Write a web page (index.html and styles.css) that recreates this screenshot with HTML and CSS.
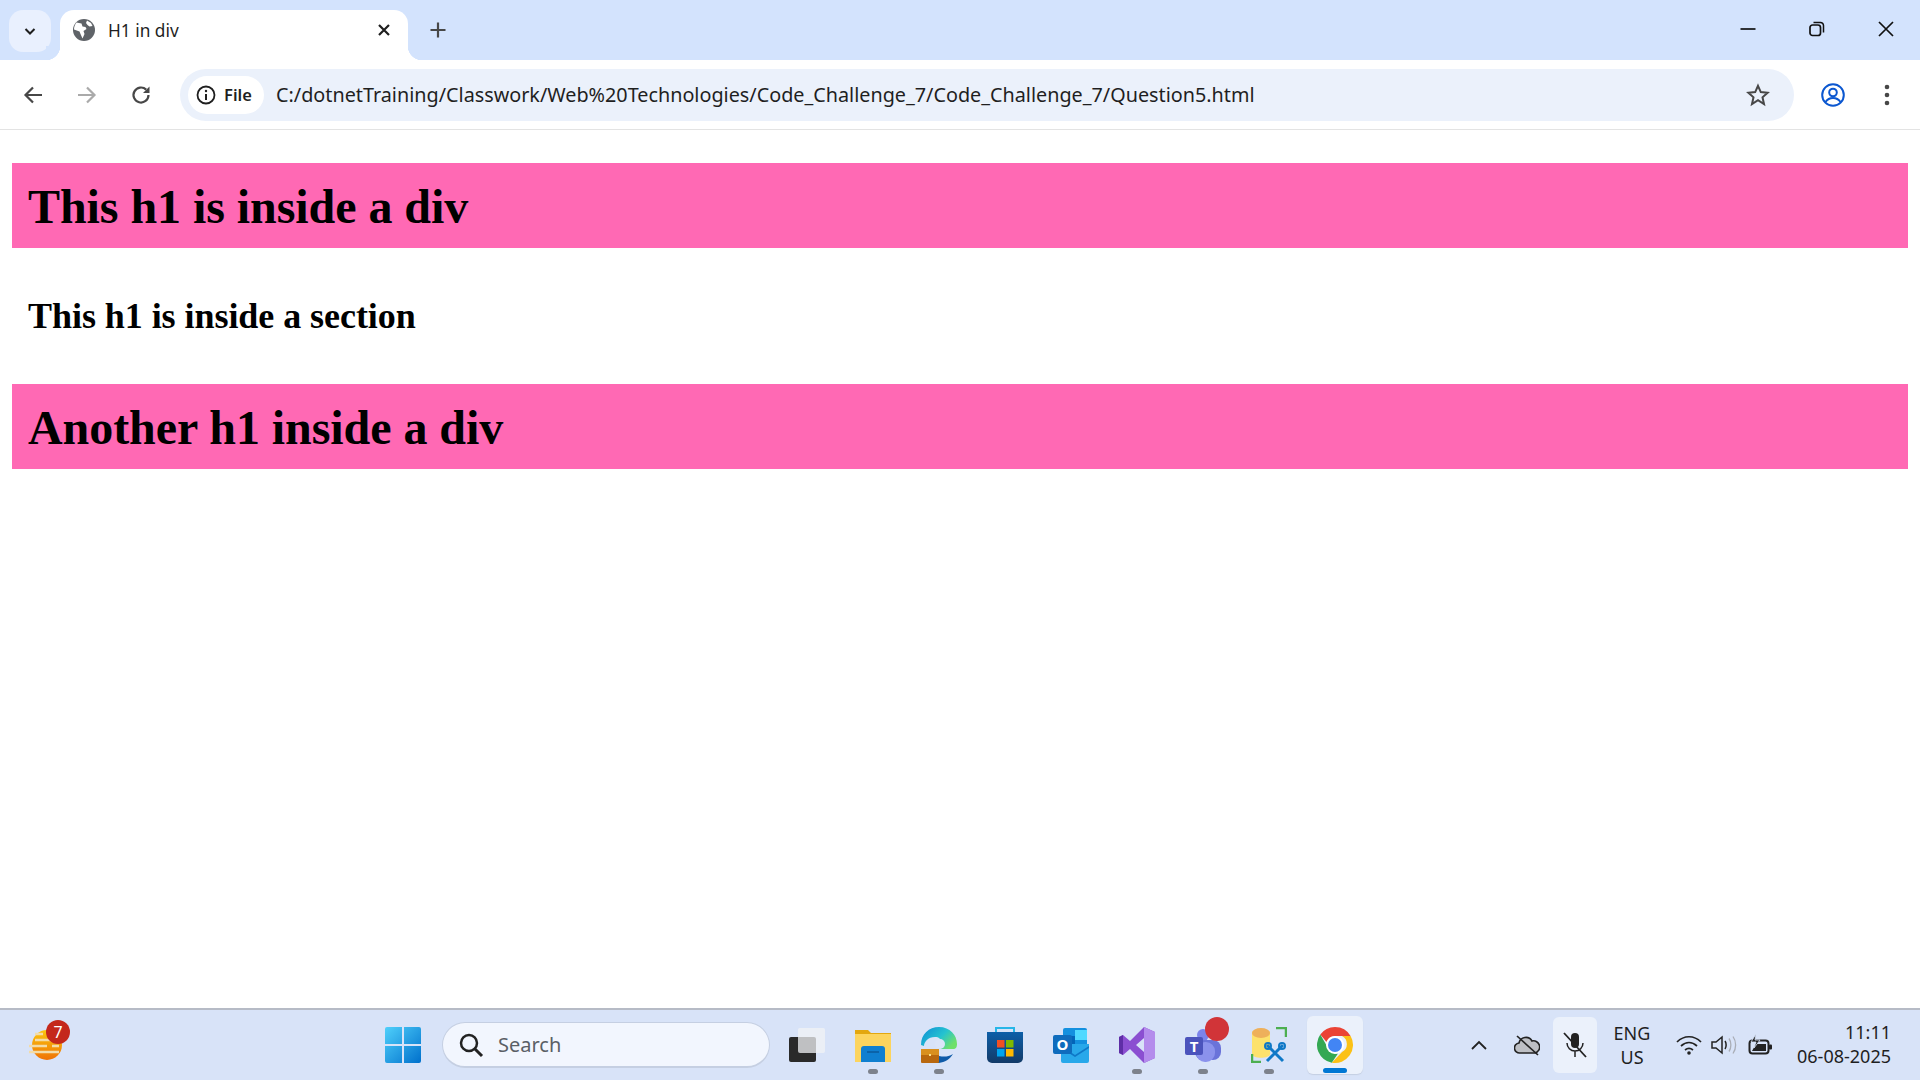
FILE: index.html
```html
<!DOCTYPE html>
<html lang="en">
<head>
    <meta charset="UTF-8">
    <title>H1 in div</title>
    <link rel="stylesheet" href="styles.css">
</head>
<body>
    <div class="tabstrip">
        <div class="tab-search">
            <svg width="16" height="16" viewBox="0 0 16 16"><path d="M3.5 6l4.5 4.5L12.500 6" fill="none" stroke="#1f1f1f" stroke-width="2"/></svg>
        </div>
        <div class="tab">
            <svg class="favicon" width="22" height="22" viewBox="0 0 22 22">
                <circle cx="11" cy="11" r="11" fill="#5f6368"/>
                <path d="M3.500 3.500l5 1 1 3 3 .5 1 2-3 2 1 3-2 4.500-2-4.500-1-2.500-5.500-2C1 8 2 5 3.500 3.500zM14 1.500l4 2.500 1.500 3-3 .5-2-1.500-1.500-2z" fill="#fff"/>
            </svg>
            <span class="tab-title">H1 in div</span>
            <svg class="tab-close" width="16" height="16" viewBox="0 0 16 16"><path d="M3 3l10 10M13 3L3 13" stroke="#1f1f1f" stroke-width="2.200"/></svg>
        </div>
        <svg class="new-tab" width="18" height="18" viewBox="0 0 18 18"><path d="M9 1.500v15M1.500 9h15" stroke="#474747" stroke-width="2.200"/></svg>
        <div class="window-btns">
            <svg width="18" height="18" viewBox="0 0 18 18"><path d="M1.500 9h15" stroke="#111" stroke-width="1.700"/></svg>
            <svg width="18" height="18" viewBox="0 0 18 18"><rect x="2" y="5" width="10.500" height="10.500" rx="2.500" fill="none" stroke="#111" stroke-width="1.700"/><path d="M5.500 2.500h7a3 3 0 0 1 3 3v7" fill="none" stroke="#111" stroke-width="1.500"/></svg>
            <svg width="18" height="18" viewBox="0 0 18 18"><path d="M2 2l14 14M16 2L2 16" stroke="#111" stroke-width="1.700"/></svg>
        </div>
    </div>

    <div class="toolbar">
        <svg class="nav-icon" width="22" height="22" viewBox="0 0 22 22"><path d="M20 11H4M11 3.500L3.500 11l7.500 7.500" fill="none" stroke="#474747" stroke-width="2.200"/></svg>
        <svg class="nav-icon" width="22" height="22" viewBox="0 0 22 22"><path d="M2 11h16M11 3.500l7.500 7.500-7.500 7.500" fill="none" stroke="#aaaaaa" stroke-width="2.200"/></svg>
        <svg class="nav-icon" width="22" height="22" viewBox="0 0 22 22"><path d="M18.500 11a7.500 7.500 0 1 1-2.300-5.400" fill="none" stroke="#474747" stroke-width="2.200"/><path d="M19.500 2.500v6.500H13z" fill="#474747"/></svg>
        <div class="omnibox">
            <div class="chip">
                <svg width="20" height="20" viewBox="0 0 20 20"><circle cx="10" cy="10" r="8.500" fill="none" stroke="#1f1f1f" stroke-width="1.800"/><path d="M10 9v6" stroke="#1f1f1f" stroke-width="2"/><circle cx="10" cy="6" r="1.200" fill="#1f1f1f"/></svg>
                <span>File</span>
            </div>
            <span class="url">C:/dotnetTraining/Classwork/Web%20Technologies/Code_Challenge_7/Code_Challenge_7/Question5.html</span>
            <svg class="star" width="24" height="24" viewBox="0 0 24 24"><path d="M12 2.800l2.800 6.300 6.800.7-5.100 4.500 1.500 6.700L12 17.100l-6 3.900 1.500-6.700L2.400 9.800l6.800-.7z" fill="none" stroke="#474747" stroke-width="2"/></svg>
        </div>
        <svg class="profile" width="24" height="24" viewBox="0 0 24 24"><circle cx="12" cy="12" r="10.800" fill="none" stroke="#0b57d0" stroke-width="2"/><circle cx="12" cy="9.500" r="3.800" fill="none" stroke="#0b57d0" stroke-width="2"/><path d="M4.500 19c2-3 4.500-4 7.500-4s5.500 1 7.500 4" fill="none" stroke="#0b57d0" stroke-width="2"/></svg>
        <svg class="menu" width="6" height="22" viewBox="0 0 6 22"><circle cx="3" cy="3" r="2.300" fill="#474747"/><circle cx="3" cy="11" r="2.300" fill="#474747"/><circle cx="3" cy="19" r="2.300" fill="#474747"/></svg>
    </div>

    <main class="page">
        <div class="pink">
            <h1>This h1 is inside a div</h1>
        </div>
        <section class="plain">
            <h1>This h1 is inside a section</h1>
        </section>
        <div class="pink">
            <h1>Another h1 inside a div</h1>
        </div>
    </main>

    <footer class="taskbar">
        <div class="widget">
            <svg width="40" height="34" viewBox="0 0 40 34">
                <defs><linearGradient id="sun" x1="0" y1="0" x2="0" y2="1"><stop offset="0" stop-color="#fbc70f"/><stop offset="1" stop-color="#ef7204"/></linearGradient></defs>
                <circle cx="18" cy="18" r="15" fill="url(#sun)"/>
                <path d="M6 7h8M6 13h22M0 19h18M23 19h7M0 25h30" stroke="#f3dca8" stroke-width="2.500"/>
            </svg>
            <span class="badge">7</span>
        </div>
        <div class="center">
            <div class="slot start">
                <svg width="36" height="36" viewBox="0 0 36 36">
                    <defs><linearGradient id="win" x1="0" y1="0" x2="1" y2="1"><stop offset="0" stop-color="#4fd0fb"/><stop offset="1" stop-color="#0070cc"/></linearGradient></defs>
                    <path d="M2 0h15v17H0V2a2 2 0 0 1 2-2zM19 0h15a2 2 0 0 1 2 2v15H19zM0 19h17v17H2a2 2 0 0 1-2-2zM19 19h17v15a2 2 0 0 1-2 2H19z" fill="url(#win)"/>
                </svg>
            </div>
            <div class="searchbox">
                <svg width="26" height="26" viewBox="0 0 26 26"><circle cx="11" cy="11" r="8" fill="none" stroke="#222" stroke-width="2.500"/><path d="M17 17l7 7" stroke="#222" stroke-width="3"/></svg>
                <span>Search</span>
            </div>
            <div class="slot">
                <svg width="38" height="36" viewBox="0 0 38 36"><rect x="1" y="10" width="27" height="25" rx="2" fill="#2a2a2a"/><rect x="10" y="1" width="27" height="25" rx="2" fill="#f2f3f5" fill-opacity=".75"/></svg>
            </div>
            <div class="slot open">
                <svg width="36" height="34" viewBox="0 0 36 34"><path d="M0 2h13l3 3h20v29H0z" fill="#e3a70f"/><path d="M0 6h36v28H0z" fill="#fcd45e"/><path d="M6 34v-13a3 3 0 0 1 3-3h18a3 3 0 0 1 3 3v13z" fill="#0f7fd0"/><path d="M12 24h12" stroke="#0b5a9c" stroke-width="1.500"/></svg>
            </div>
            <div class="slot open">
                <svg width="36" height="36" viewBox="0 0 36 36">
                    <defs><linearGradient id="edge" x1="0" y1="0" x2="1" y2=".6"><stop offset="0" stop-color="#0c8bd6"/><stop offset=".6" stop-color="#25c3d0"/><stop offset="1" stop-color="#6fe06a"/></linearGradient></defs>
                    <path d="M0 18C0 7 8 0 18 0c11 0 18 8 18 17 0 3-1 5-4 5H20c-2 0-3-1-3-3 0-2 3-4 3-4 0-3-2-5-6-5-7 0-11 5-11 9z" fill="url(#edge)"/>
                    <circle cx="19" cy="17" r="5" fill="#dbe5f8"/>
                    <path d="M12 36c8 1 16-2 20-9-5 3-9 3-14 2z" fill="#0f5ba8"/>
                    <rect x="0" y="23" width="18" height="13" rx="1" fill="#b8680f"/><rect x="0" y="22" width="18" height="6" fill="#d9901f"/><rect x="8" y="27" width="2" height="2" fill="#fbe08a"/>
                </svg>
            </div>
            <div class="slot">
                <svg width="36" height="36" viewBox="0 0 36 36">
                    <defs><linearGradient id="store" x1="0" y1="0" x2="0" y2="1"><stop offset="0" stop-color="#0d5fa8"/><stop offset="1" stop-color="#123a68"/></linearGradient></defs>
                    <path d="M9 6V1h18v5" fill="none" stroke="#27b6e8" stroke-width="2"/>
                    <path d="M0 5h36v26a5 5 0 0 1-5 5H5a5 5 0 0 1-5-5z" fill="url(#store)"/>
                    <rect x="10" y="13" width="7.500" height="7.500" fill="#f25022"/><rect x="19" y="13" width="7.500" height="7.500" fill="#7fba00"/><rect x="10" y="22" width="7.500" height="7.500" fill="#00a4ef"/><rect x="19" y="22" width="7.500" height="7.500" fill="#ffb900"/>
                </svg>
            </div>
            <div class="slot">
                <svg width="36" height="36" viewBox="0 0 36 36"><rect x="10" y="1" width="24" height="18" rx="2" fill="#1490df"/><rect x="22" y="3" width="12" height="10" fill="#50d9ff"/><rect x="10" y="9" width="12" height="9" fill="#0364b8"/><path d="M8 17h28v17a2 2 0 0 1-2 2H10a2 2 0 0 1-2-2z" fill="#28a8ea"/><path d="M8 19l14 9 14-9v2l-14 9-14-9z" fill="#0f78c7"/><rect x="0" y="8" width="19" height="19" rx="2" fill="#0f6cbd"/><text class="app-letter" x="9.500" y="23" text-anchor="middle">O</text></svg>
            </div>
            <div class="slot open">
                <svg width="36" height="36" viewBox="0 0 36 36"><path d="M25 0l11 5v26l-11 5-14-14-7 6-4-2V10l4-2 7 6zM25 11l-8 7 8 7z" fill="#8b4fd1"/><path d="M25 0l11 5v26l-11 5z" fill="#b48cec"/><path d="M0 10l4-2v20l-4-2z" fill="#5e2ea6"/></svg>
            </div>
            <div class="slot open">
                <svg width="36" height="34" viewBox="0 0 36 34"><circle cx="18" cy="7" r="6" fill="#7b83eb"/><rect x="10" y="12" width="26" height="20" rx="8" fill="#6a73d9"/><rect x="11" y="14" width="19" height="20" rx="9" fill="#8b92ec"/><rect x="0" y="9" width="18" height="18" rx="2" fill="#4b53bc"/><text class="app-letter" x="9" y="23.500" text-anchor="middle">T</text></svg>
                <span class="dot-red"></span>
            </div>
            <div class="slot open">
                <svg width="36" height="36" viewBox="0 0 36 36"><path d="M1 6c0-5 18-5 18 0v21c0 5-18 5-18 0z" fill="#fde26c"/><ellipse cx="10" cy="6" rx="9" ry="5" fill="#eeb05b"/><path d="M25 1h10v9M1 27v8h9" fill="none" stroke="#4caf50" stroke-width="2.500"/><path d="M16 18l16 16M32 18L16 34" stroke="#0f78c7" stroke-width="3"/><circle cx="17" cy="19" r="3" fill="none" stroke="#0f78c7" stroke-width="2"/><circle cx="31" cy="19" r="3" fill="none" stroke="#0f78c7" stroke-width="2"/></svg>
            </div>
            <div class="slot active">
                <svg width="36" height="36" viewBox="0 0 36 36">
                    <path d="M18 0a18 18 0 0 1 15.600 9H18a9 9 0 0 0-8.500 6L3.300 7.600A18 18 0 0 1 18 0z" fill="#ea4335"/>
                    <path d="M3.300 7.600L11 21a9 9 0 0 0 10 5.500L14.800 35.700A18 18 0 0 1 3.300 7.600z" fill="#34a853"/>
                    <path d="M33.600 9A18 18 0 0 1 14.800 35.700L25 25a9 9 0 0 0 0-16z" fill="#fbc116"/>
                    <circle cx="18" cy="18" r="9" fill="#fff"/><circle cx="18" cy="18" r="7" fill="#4285f4"/>
                </svg>
            </div>
        </div>
        <div class="tray">
            <svg class="tray-icon chevron" width="18" height="10" viewBox="0 0 18 10"><path d="M2 9l7-7 7 7" fill="none" stroke="#222" stroke-width="1.800"/></svg>
            <svg class="tray-icon cloud" width="26" height="22" viewBox="0 0 26 22"><path d="M6 19a5 5 0 0 1-1-10 7 7 0 0 1 13-2 6 6 0 0 1 3 12z" fill="#bdbfc4" stroke="#222" stroke-width="1.600"/><path d="M3 2l21 19" stroke="#222" stroke-width="1.600"/></svg>
            <div class="mic">
                <svg width="26" height="26" viewBox="0 0 26 26"><rect x="9" y="1" width="8" height="15" rx="4" fill="#222"/><path d="M5 11a8 8 0 0 0 16 0M13 19v6" fill="none" stroke="#222" stroke-width="1.500"/><path d="M2 1l22 24" stroke="#222" stroke-width="1.800"/></svg>
            </div>
            <div class="lang"><span>ENG</span><span>US</span></div>
            <svg class="tray-icon wifi" width="26" height="20" viewBox="0 0 26 20"><path d="M1 7c7-7 17-7 24 0M5 11c5-4.500 11-4.500 16 0M9 15c2.500-2 5.500-2 8 0" fill="none" stroke="#222" stroke-width="1.700"/><circle cx="13" cy="18" r="1.800" fill="#222"/></svg>
            <svg class="tray-icon speaker" width="26" height="20" viewBox="0 0 26 20"><path d="M1 7h4l6-5v16l-6-5H1z" fill="none" stroke="#222" stroke-width="1.500"/><path d="M14 6c1.500 2 1.500 6 0 8" fill="none" stroke="#222" stroke-width="1.500"/><path d="M18 3.500c2.500 3.500 2.500 9.500 0 13M22 1.500c3.500 5 3.500 12 0 17" fill="none" stroke="#a9adb6" stroke-width="1.300"/></svg>
            <svg class="tray-icon battery" width="24" height="22" viewBox="0 0 24 22"><rect x="1.500" y="6.500" width="19" height="13" rx="3" fill="none" stroke="#222" stroke-width="2"/><rect x="21" y="10.500" width="3" height="5" rx="1" fill="#222"/><path d="M8 10h10v7H4z" fill="#222"/><path d="M8 0L3 8h5l-2 6 6-8H7z" fill="#222" stroke="#d8e3f8" stroke-width=".8"/></svg>
            <div class="clock"><span>11:11</span><span>06-08-2025</span></div>
        </div>
    </footer>
</body>
</html>
```

FILE: styles.css
```css
* {
    margin: 0;
    padding: 0;
    box-sizing: border-box;
}
body {
    width: 1920px;
    height: 1080px;
    overflow: hidden;
    display: flex;
    flex-direction: column;
    background: #fff;
    font-family: "Noto Sans", sans-serif;
    color: #1f1f1f;
}

/* tab strip */
.tabstrip {
    height: 60px;
    flex: none;
    display: flex;
    align-items: flex-end;
    background: #d3e3fd;
    padding-left: 9px;
}
.tab-search {
    width: 42px;
    height: 42px;
    margin-bottom: 8px;
    display: flex;
    align-items: center;
    justify-content: center;
    background: #e9f0fe;
    border-radius: 14px;
}
.tab {
    position: relative;
    width: 348px;
    height: 50px;
    margin-left: 9px;
    display: flex;
    align-items: center;
    padding: 0 16px 10px 13px;
    background: #fff;
    border-radius: 14px 14px 0 0;
}
.tab::before,
.tab::after {
    content: "";
    position: absolute;
    bottom: 0;
    width: 14px;
    height: 14px;
}
.tab::before {
    left: -14px;
    background: radial-gradient(circle at 0 0, #d3e3fd 14px, #fff 14.5px);
}
.tab::after {
    right: -14px;
    background: radial-gradient(circle at 100% 0, #d3e3fd 14px, #fff 14.5px);
}
.favicon {
    flex: none;
}
.tab-title {
    margin-left: 13px;
    font-size: 17.300px;
    flex: 1;
}
.new-tab {
    margin: 0 0 21px 21px;
}
.window-btns {
    margin-left: auto;
    margin-bottom: 22px;
    display: flex;
    padding-right: 25px;
    gap: 51px;
}

/* toolbar */
.toolbar {
    height: 70px;
    flex: none;
    display: flex;
    align-items: center;
    padding: 0 22px 0 22px;
    background: #fff;
    border-bottom: 1px solid #e3e3e3;
    border-radius: 14px 14px 0 0;
}
.nav-icon {
    margin-right: 32px;
}
.omnibox {
    width: 1614px;
    height: 52px;
    margin-left: -4px;
    display: flex;
    align-items: center;
    padding: 0 24px 0 8px;
    background: #ebf1fb;
    border-radius: 26px;
}
.chip {
    height: 38px;
    width: 76px;
    display: flex;
    align-items: center;
    gap: 8px;
    padding-left: 8px;
    background: #fff;
    border-radius: 19px;
    font-size: 16.500px;
    font-weight: 600;
    flex: none;
}
.url {
    margin-left: 12px;
    font-size: 19.800px;
    white-space: nowrap;
    flex: 1;
}
.profile {
    margin-left: 27px;
}
.menu {
    margin-left: 39px;
}

/* page content */
.page {
    flex: 1;
    padding: 33px 12px 0;
    font-family: "Liberation Serif", serif;
    color: #000;
}
.pink {
    background: hotpink;
    padding: 16px 16px 14px;
}
.pink h1 {
    font-size: 48px;
    line-height: 55px;
    letter-spacing: -0.06px;
}
.plain {
    padding: 47px 16px 47px;
}
.plain h1 {
    font-size: 36px;
    line-height: 42px;
    letter-spacing: -0.05px;
}

/* taskbar */
.taskbar {
    height: 72px;
    flex: none;
    display: flex;
    align-items: center;
    background: #d8e3f8;
    border-top: 2px solid #b6bbc6;
}
.widget {
    position: relative;
    width: 370px;
    height: 50px;
    padding: 7px 0 0 29px;
    flex: none;
}
.badge {
    position: absolute;
    left: 46px;
    top: 0;
    width: 24px;
    height: 24px;
    border-radius: 50%;
    background: #c4281c;
    color: #fff;
    font-size: 16px;
    line-height: 24px;
    text-align: center;
}
.center {
    display: flex;
    align-items: center;
    width: 993px;
    flex: none;
}
.slot {
    position: relative;
    width: 66px;
    height: 58px;
    flex: none;
    display: flex;
    align-items: center;
    justify-content: center;
}
.slot.open::after,
.slot.active::after {
    content: "";
    position: absolute;
    left: 50%;
    bottom: 0;
    width: 10px;
    height: 5px;
    margin-left: -5px;
    border-radius: 3px;
    background: #7d828c;
}
.slot.active {
    width: 56px;
    margin-left: 5px;
    background: #ebf1fb;
    border-radius: 6px;
    box-shadow: 0 1px 1px #c5cfe2;
}
.slot.active::after {
    width: 24px;
    margin-left: -12px;
    bottom: 1px;
    background: #0078d4;
}
.app-letter {
    font-family: "Noto Sans", sans-serif;
    font-size: 15px;
    font-weight: 700;
    fill: #fff;
}
.dot-red {
    position: absolute;
    left: 35px;
    top: 1px;
    width: 24px;
    height: 24px;
    border-radius: 50%;
    background: #d13438;
}
.searchbox {
    width: 328px;
    height: 46px;
    margin: 0 4px 0 6px;
    flex: none;
    display: flex;
    align-items: center;
    gap: 14px;
    padding-left: 15px;
    background: #f2f6fe;
    border: 1px solid #c5cfe2;
    border-bottom-width: 2px;
    border-radius: 23px;
    font-size: 20px;
    color: #5a5f66;
}
.tray {
    flex: 1;
    display: flex;
    align-items: center;
    height: 58px;
    padding-left: 107px;
}
.tray-icon {
    flex: none;
}
.cloud {
    margin-left: 26px;
}
.mic {
    width: 44px;
    height: 56px;
    margin-left: 13px;
    display: flex;
    align-items: center;
    justify-content: center;
    background: #ebf1fb;
    border-radius: 6px;
    flex: none;
}
.lang {
    width: 70px;
    display: flex;
    flex-direction: column;
    align-items: center;
    font-size: 18px;
    line-height: 24px;
}
.wifi {
    margin-left: 9px;
}
.speaker {
    margin-left: 9px;
}
.battery {
    margin-left: 11px;
}
.clock {
    margin-left: 19px;
    width: 100px;
    padding-bottom: 3px;
    display: flex;
    flex-direction: column;
    align-items: flex-end;
    font-size: 18px;
    line-height: 24px;
}
```
